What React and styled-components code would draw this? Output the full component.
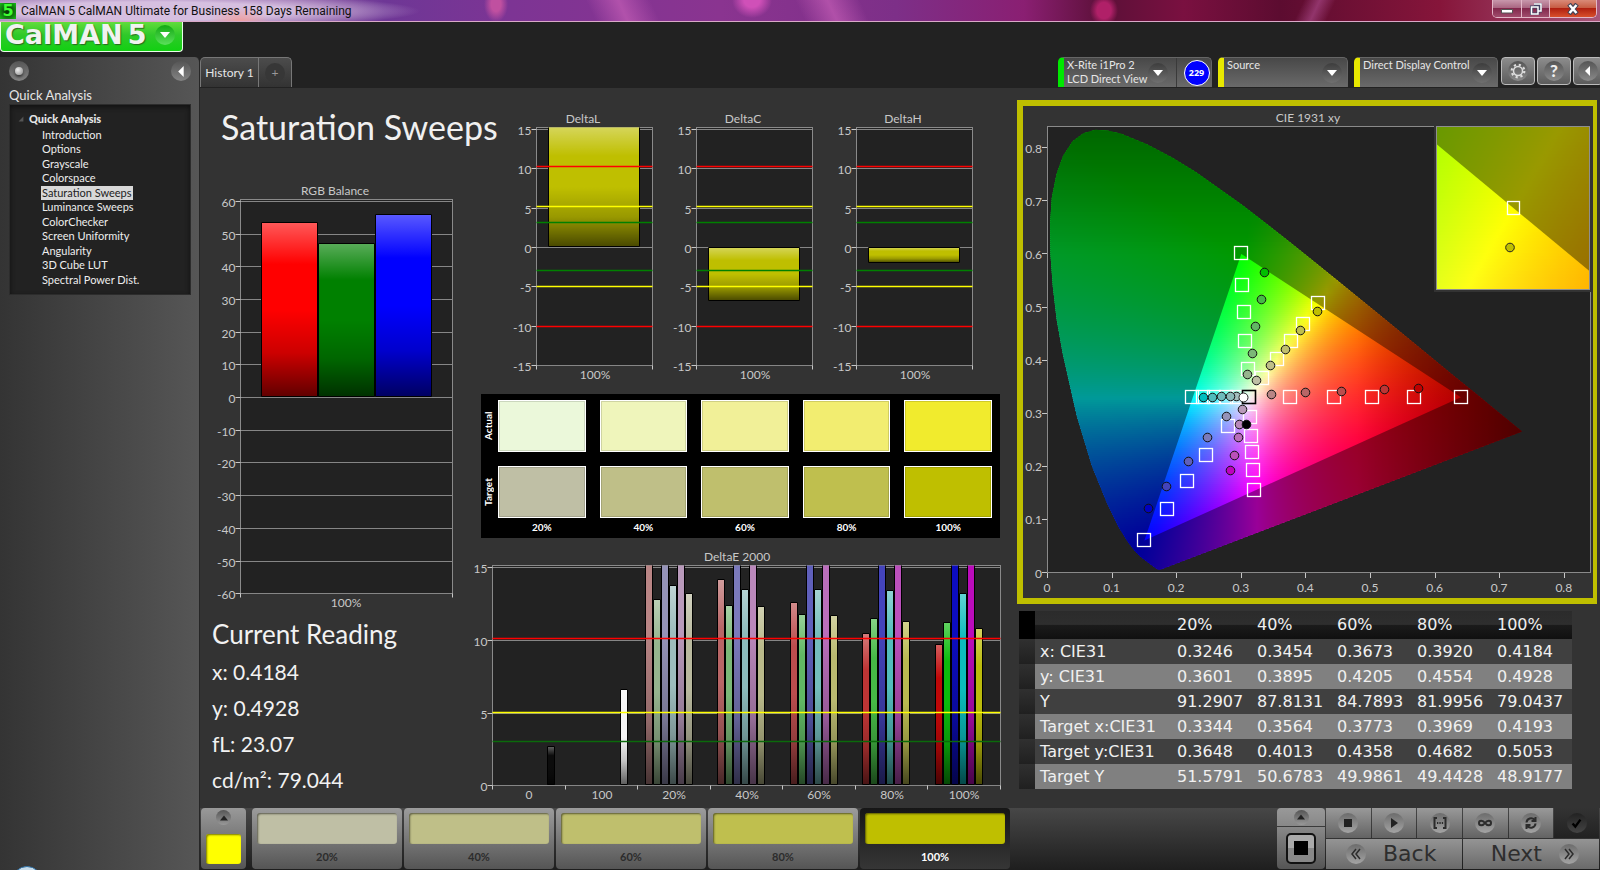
import React from "react";
import styled, { createGlobalStyle } from "styled-components";

const GlobalStyle = createGlobalStyle`
  *, *::before, *::after { box-sizing: border-box; }
  body { margin: 0; background: #222; color: #e6e6e6; font: 12px/16px Lato, "Open Sans", sans-serif; }
  button { font: inherit; color: inherit; border: 0; padding: 0; margin: 0; background: none; cursor: pointer; }
  h1, h2, p, ul { margin: 0; padding: 0; }
  ul { list-style: none; }
  svg { display: block; }
  a { color: inherit; text-decoration: none; }
`;

const Page = styled.div`
  display: flex;
  flex-direction: column;
  min-height: 100vh;
  overflow: hidden;
`;

/* ---------- window title bar ---------- */

const TitleBar = styled.header`
  display: flex;
  align-items: center;
  height: 22px;
  border-bottom: 1px solid #d9a9c8;
  background:
    radial-gradient(ellipse 12px 18px at 31% 20%, #c050a0 0 40%, #c050a000 100%),
    radial-gradient(ellipse 20px 18px at 47% 0, #d050b8 0 40%, #d050b800 100%),
    radial-gradient(ellipse 14px 16px at 69% 50%, #b02068 0 50%, #b0206800 100%),
    radial-gradient(ellipse 30px 14px at 15% 100%, #f0a0a0 0, #f0a0a000 100%),
    radial-gradient(ellipse 270px 18px at 150px 11px, #d6bfe0 0 50%, #d6bfe000 100%),
    linear-gradient(115deg, #ffffff00 81%, #a84888aa 82%, #ffffff00 83%),
    linear-gradient(65deg, #ffffff00 37%, #c860b8aa 39%, #ffffff00 41%, #ffffff00 50%, #c860b8aa 52%, #ffffff00 54%),
    linear-gradient(90deg, #8d6aa8 0, #8f62a8 18%, #6e3796 24%, #7d3494 32%, #8a3490 45%, #7d2f88 56%, #8a1f72 64%, #5c1038 69%, #7a1040 74%, #5c0c30 80%, #86153a 90%, #a7567a 100%);
`;

const AppBadge = styled.span`
  width: 16px;
  height: 16px;
  margin: 0 5px 0 0;
  background: radial-gradient(circle, #0a3a08 20%, #18c018 100%);
  color: #3dff30;
  font: bold 16px/16px "DejaVu Sans", sans-serif;
  text-align: center;
`;

const WindowTitle = styled.span`
  flex: 1;
  color: #111;
  font: 12px/16px Roboto, sans-serif;
`;

const WindowButtons = styled.div`
  display: flex;
  align-self: flex-start;
  height: 18px;
  margin-right: 3px;
  border: 1px solid #e3b7c8;
  border-top: 0;
  border-radius: 0 0 5px 5px;
  overflow: hidden;
`;

const WindowButton = styled.button`
  display: grid;
  place-items: center;
  width: ${(p) => (p.$close ? 47 : 28)}px;
  border-left: ${(p) => (p.$first ? 0 : 1)}px solid #e3b7c8;
  background: ${(p) =>
    p.$close
      ? "linear-gradient(#d98a78 0, #c65a40 48%, #b02010 50%, #d8502c 100%)"
      : "linear-gradient(#c898ac 0, #a86480 48%, #82284c 50%, #a04c6c 100%)"};
`;

/* ---------- logo strip ---------- */

const LogoStrip = styled.div`
  height: 35px;
`;

const LogoButton = styled.button`
  display: flex;
  align-items: center;
  gap: 9px;
  height: 30px;
  width: 183px;
  padding: 0 0 4px 4px;
  border: 1px solid #e8ffe8;
  border-top: 0;
  border-radius: 0 0 4px 4px;
  background: linear-gradient(#62dc3c 0, #2fc92a 45%, #12d012 100%);
`;

const LogoText = styled.span`
  display: flex;
  gap: 5px;
  color: #f0f3f0;
  font: bold 27px/26px "DejaVu Sans", sans-serif;
  text-shadow: 1px 1px 1px #2c6a20;
`;

const LogoArrow = styled.span`
  display: grid;
  place-items: center;
  width: 20px;
  height: 20px;
  border-radius: 50%;
  background: linear-gradient(#12a812, #5be05b);
`;

/* ---------- sidebar ---------- */

const Body = styled.div`
  display: flex;
  flex: 1;
`;

const Sidebar = styled.aside`
  position: relative;
  flex: 0 0 200px;
  padding: 4px 8px 0 9px;
  border-right: 1px solid #262626;
  border-radius: 0 5px 0 0;
  background: linear-gradient(90deg, #343434, #565656);
  overflow: hidden;
`;

const SidebarTools = styled.div`
  display: flex;
  justify-content: space-between;
  height: 26px;
`;

const RoundButton = styled.button`
  display: grid;
  place-items: center;
  width: 20px;
  height: 20px;
  border-radius: 50%;
  background: linear-gradient(#555, #848484);
`;

const Knob = styled.span`
  width: 8px;
  height: 8px;
  border-radius: 50%;
  background: radial-gradient(circle at 35% 35%, #eee, #888);
  box-shadow: 0 2px 3px #333;
`;

const SidebarTitle = styled.h2`
  margin-bottom: 1px;
  font: 13px/16px Lato, sans-serif;
`;

const Tree = styled.nav`
  margin-top: 1px;
  padding: 7px 8px 5px 19px;
  border: 1px solid #2c2c2c;
  background: #222;
  box-shadow: inset 0 2px 5px #111;
  font-size: 11px;
  min-height: 191px;
`;

const TreeHead = styled.div`
  display: flex;
  align-items: center;
  gap: 5px;
  margin-left: -11px;
  height: 14px;
  font: 900 11px/14px Lato, sans-serif;
`;

const TreeList = styled.ul`
  display: flex;
  flex-direction: column;
  align-items: flex-start;
  padding: 2px 0 0 12px;
`;

const TreeLink = styled.a`
  display: block;
  height: 14px;
  padding: 0 1px;
  color: ${(p) => (p.$active ? "#222" : "#eee")};
  background: ${(p) => (p.$active ? "#d8d8d8" : "none")};
  font: 11px/14px Lato, sans-serif;
`;

const TreeItem = styled.li`
  height: 14px;
  &:nth-child(2n) { margin-bottom: 1px; }
`;

const StartOrb = styled.div`
  position: absolute;
  left: 12px;
  bottom: -26px;
  width: 30px;
  height: 30px;
  border: 1px solid #2f72a8;
  border-radius: 50%;
  background: #c8dcea;
`;

/* ---------- tabs and devices ---------- */

const Main = styled.main`
  display: flex;
  flex-direction: column;
  flex: 1;
  min-width: 0;
`;

const TopRow = styled.div`
  display: flex;
  align-items: flex-start;
  height: 31px;
  overflow: hidden;
`;

const Tabs = styled.div`
  display: flex;
  flex: 1;
`;

const Tab = styled.button`
  display: grid;
  place-items: center;
  width: ${(p) => (p.$narrow ? 33 : 59)}px;
  height: 30px;
  border: solid #777;
  border-width: 1px 1px 0 ${(p) => (p.$narrow ? 0 : 1)}px;
  border-radius: ${(p) => (p.$narrow ? "0 5px 0 0" : "5px 0 0 0")};
  background: linear-gradient(#4c4c4c, #333);
`;

const PlusMark = styled.span`
  width: 20px;
  height: 20px;
  border-radius: 50%;
  background: #373737;
  color: #999;
  font: 12px/20px Lato, sans-serif;
`;

const Devices = styled.div`
  display: flex;
  gap: 6px;
  margin-right: 3px;
`;

const Device = styled.div`
  display: flex;
  align-items: stretch;
  width: ${(p) => p.$width}px;
  height: 30px;
  border: 1px solid #666;
  border-bottom: 0;
  border-left: 6px solid ${(p) => p.$stripe};
  border-radius: 5px 5px 0 0;
  background: linear-gradient(#484848, #6a6a6a);
`;

const DeviceMenu = styled.button`
  display: flex;
  flex: 1;
  align-items: center;
  justify-content: space-between;
  padding: 0 5px 0 3px;
  text-align: left;
  font: 11px/14px Lato, sans-serif;
  white-space: nowrap;
`;

const DeviceName = styled.span`
  align-self: flex-start;
`;

const MenuArrow = styled.span`
  display: grid;
  place-items: center;
  flex: none;
  width: 20px;
  height: 20px;
  border-radius: 50%;
  background: linear-gradient(#3d3d3d, #707070);
`;

const CountCell = styled.div`
  display: grid;
  place-items: center;
  width: 35px;
  margin-left: 3px;
  padding-left: 5px;
  border-left: 1px solid #3a3a3a;
`;

const Count = styled.span`
  width: 26px;
  height: 26px;
  border: 1px solid #fff;
  border-radius: 50%;
  background: #00f;
  color: #fff;
  font: bold 9px/24px "Open Sans", sans-serif;
  text-align: center;
`;

const Tools = styled.div`
  display: flex;
  gap: 2px;
  width: 99px;
`;

const ToolButton = styled.button`
  display: grid;
  place-items: center;
  flex: none;
  width: ${(p) => (p.$edge ? 30 : 34)}px;
  height: 28px;
  border: 1px solid #bbb;
  border-radius: 4px;
  background: linear-gradient(#8c8c8c, #5c5c5c);
`;

const ToolFace = styled.span`
  display: grid;
  place-items: center;
  width: 20px;
  height: 20px;
  border-radius: 50%;
  background: linear-gradient(#555, #8a8a8a);
  color: #eee;
  font: 900 17px/20px Lato, sans-serif;
`;

/* ---------- dashboard ---------- */

const Dashboard = styled.div`
  display: grid;
  grid-template-columns: 275fr 535fr 590fr;
  flex: 1;
  align-items: start;
  background: #333;
`;

const LeftColumn = styled.section`
  min-width: 0;
  padding-top: 19px;
`;

const MiddleColumn = styled.section`
  min-width: 0;
  padding-top: 22px;
`;

const RightColumn = styled.section`
  min-width: 0;
  padding: 12px 3px 0 7px;
`;

const PageTitle = styled.h1`
  margin: 0 0 33px 21px;
  color: #f0f0f0;
  font: 34px/40px Lato, sans-serif;
  white-space: nowrap;
`;

const ChartSvg = styled.svg`
  width: 100%;
  height: auto;
  overflow: visible;
  font: 12px Lato, sans-serif;
  fill: #c8c8c8;
`;

const Reading = styled.div`
  padding: 4px 0 0 12px;
  color: #f2f2f2;
`;

const ReadingTitle = styled.h2`
  margin-bottom: 2px;
  font: 26px/36px Lato, sans-serif;
`;

const ReadingLine = styled.p`
  font: 21px/36px Lato, sans-serif;
`;

const DeltaRow = styled.div`
  display: grid;
  grid-template-columns: repeat(3, 1fr);
  padding: 0 30px 0 25px;
`;

const SwatchPanel = styled.div`
  display: flex;
  flex-direction: column;
  gap: 14px;
  height: 144px;
  margin: 10px 10px 7px 6px;
  padding: 6px 8px 0 0;
  background: #000;
  color: #fff;
`;

const SwatchRow = styled.div`
  display: grid;
  grid-template-columns: 17px 1fr;
`;

const SwatchCells = styled.div`
  display: grid;
  grid-template-columns: repeat(5, 1fr);
  grid-column: 2;
  gap: 14px;
`;

const RowName = styled.div`
  writing-mode: vertical-rl;
  transform: rotate(180deg);
  padding-left: 3px;
  text-align: center;
  font: bold 10px/14px Lato, sans-serif;
`;

const Swatch = styled.div`
  height: 52px;
  border: 1px solid #fff;
  background: ${(p) => p.$color};
  box-shadow: inset 0 0 0 1px #0002;
`;

const SwatchLabel = styled.div`
  margin-top: -12px;
  text-align: center;
  font: bold 10px/14px Lato, sans-serif;
`;

const CiePanel = styled.div`
  border: 6px solid #bfbf00;
  border-right-width: 4px;
  background: #333;
`;

const DataTable = styled.table`
  width: calc(100% - 27px);
  margin: 7px 0 0 2px;
  border-collapse: collapse;
  table-layout: fixed;
  color: #f0f0f0;
  font: 16px/24px "DejaVu Sans", sans-serif;
  text-align: left;
`;

const HeadRow = styled.tr`
  height: 28px;
  background: linear-gradient(#2b2b2b 0, #2e2e2e 48%, #1b1b1b 50%, #101010 100%);
`;

const DataRow = styled.tr`
  height: 25px;
  background: ${(p) => (p.$light ? "#808080" : "#404040")};
`;

const HeadCell = styled.th`
  padding: 0 0 0 5px;
  font-weight: normal;
`;

const DataCell = styled.td`
  padding: 0 0 0 5px;
  white-space: nowrap;
`;

const Marker = styled.td`
  padding: 0;
  background: ${(p) => (p.$head ? "#000" : "linear-gradient(#303030, #202020)")};
`;

/* ---------- bottom bar ---------- */

const BottomBar = styled.footer`
  display: flex;
  height: 62px;
  padding: 0 1px 1px;
  background: linear-gradient(#474747, #1e1e1e);
`;

const CurrentColor = styled.button`
  display: flex;
  flex-direction: column;
  align-items: center;
  gap: 9px;
  width: 45px;
  margin-right: 6px;
  padding: 2px 5px 5px;
  border-radius: 4px;
  background: linear-gradient(#999, #555);
`;

const CurrentSwatch = styled.span`
  width: 35px;
  flex: 1;
  border-radius: 3px;
  background: #ff0;
  box-shadow: inset 1px 1px 2px #770;
`;

const SmallDisc = styled.span`
  display: grid;
  place-items: center;
  flex: none;
  width: 15px;
  height: 15px;
  border-radius: 50%;
  background: linear-gradient(#555, #999);
`;

const Levels = styled.div`
  display: flex;
  gap: 2px;
  flex: 0 1 758px;
  margin-right: auto;
`;

const LevelButton = styled.button`
  display: flex;
  flex: 1;
  flex-direction: column;
  padding: 5px;
  border-radius: 4px;
  background: ${(p) => (p.$active ? "linear-gradient(#161616, #363636)" : "linear-gradient(#9c9c9c, #555)")};
  color: ${(p) => (p.$active ? "#fff" : "#2c2c2c")};
  font: bold 11px/14px Lato, sans-serif;
  text-align: center;
`;

const LevelSwatch = styled.span`
  height: 36px;
  margin-bottom: 6px;
  border-radius: 3px;
  background: ${(p) => p.$color};
  box-shadow: inset 1px 1px 2px #0008;
`;

const PatternColumn = styled.div`
  display: flex;
  flex-direction: column;
  gap: 1px;
  width: 48px;
  margin-right: 1px;
`;

const PatternTab = styled.button`
  display: grid;
  place-items: center;
  height: 18px;
  border-radius: 4px 4px 0 0;
  background: linear-gradient(#999, #888);
`;

const PatternButton = styled.button`
  display: grid;
  place-items: center;
  flex: 1;
  border-radius: 0 0 4px 4px;
  background: linear-gradient(#888, #555);
`;

const PatternFace = styled.span`
  display: grid;
  place-items: center;
  width: 30px;
  height: 31px;
  border: 2px solid #111;
  border-radius: 5px;
  background: linear-gradient(#aaa 50%, #888 50%);
`;

const BlackPatch = styled.span`
  width: 14px;
  height: 14px;
  background: #000;
`;

const Transport = styled.div`
  display: grid;
  grid-template-columns: repeat(6, 1fr);
  grid-template-rows: 30px 30px;
  gap: 1px;
  width: 273px;
`;

const TransportButton = styled.button`
  display: grid;
  place-items: center;
  background: ${(p) => (p.$dark ? "linear-gradient(#333, #222)" : "linear-gradient(#999, #636363)")};
`;

const Disc = styled.span`
  display: grid;
  place-items: center;
  width: 20px;
  height: 20px;
  border-radius: 50%;
  background: ${(p) => (p.$dark ? "linear-gradient(#222, #444)" : "linear-gradient(#6c6c6c, #a4a4a4)")};
`;

const NavButton = styled.button`
  display: flex;
  grid-column: span 3;
  align-items: center;
  justify-content: ${(p) => (p.$end ? "flex-end" : "flex-start")};
  gap: 17px;
  padding: 0 20px;
  background: linear-gradient(#949494, #6a6a6a);
  color: #2e2e2e;
  font: 22px/28px "DejaVu Sans", sans-serif;
`;

/* ---------- data ---------- */

const steps = ["Introduction", "Options", "Grayscale", "Colorspace", "Saturation Sweeps", "Luminance Sweeps",
  "ColorChecker", "Screen Uniformity", "Angularity", "3D Cube LUT", "Spectral Power Dist."];

const levels = ["20%", "40%", "60%", "80%", "100%"];
const actual = ["#ebf8da", "#eff5bb", "#f1f098", "#f2ed70", "#f1eb2d"];
const target = ["#bfbfa5", "#bfbf88", "#bfbf6d", "#bfbf4e", "#bfbf00"];

const readings = [
  ["x: CIE31", "0.3246", "0.3454", "0.3673", "0.3920", "0.4184"],
  ["y: CIE31", "0.3601", "0.3895", "0.4205", "0.4554", "0.4928"],
  ["Y", "91.2907", "87.8131", "84.7893", "81.9956", "79.0437"],
  ["Target x:CIE31", "0.3344", "0.3564", "0.3773", "0.3969", "0.4193"],
  ["Target y:CIE31", "0.3648", "0.4013", "0.4358", "0.4682", "0.5053"],
  ["Target Y", "51.5791", "50.6783", "49.9861", "49.4428", "48.9177"],
];

const hues = [
  ["#b98585", "#b86666", "#bb4d4d", "#bd3535", "#bf0808"],
  ["#96b48e", "#7bb877", "#61b863", "#46b946", "#0cbb0c"],
  ["#9593b8", "#7b7abb", "#6060bb", "#4444bb", "#0c0cbf"],
  ["#9dbdbd", "#8cbbbb", "#74bcbc", "#53bcbc", "#0cbcbc"],
  ["#b99abb", "#ba88bb", "#ba6ebb", "#bb50bb", "#bb0cbb"],
  ["#b9b99e", "#b9b98a", "#b9b970", "#b9b950", "#bbbb0c"],
];
const errors = [
  [16, 14.2, 12.6, 10.5, 9.7],
  [12.8, 12.4, 11.8, 11.5, 11.2],
  [16, 16, 16, 16, 16],
  [13.8, 13.5, 13.5, 13.4, 13.2],
  [16, 16, 16, 16, 16],
  [13.2, 12.3, 11.7, 11.3, 10.8],
];

/* ---------- bar charts ---------- */

function BarChart({ id, size, frame, title, titleX, ticks, zero, scale, limits = [], limitZero, limitScale, bars, labels, labelY, marks }) {
  const [l, t, r, b] = frame;
  const y = (v) => Math.floor(zero - scale * v) + 0.5;
  return (
    <ChartSvg viewBox={`0 0 ${size[0]} ${size[1]}`} role="img" aria-label={title}>
      <defs>
        <linearGradient id={`${id}-shine`} x1="0" y1="0" x2="0" y2="1">
          <stop offset="0" stopColor="#fff" stopOpacity="0.35" />
          <stop offset="0.24" stopColor="#fff" stopOpacity="0" />
          <stop offset="0.5" stopColor="#000" stopOpacity="0" />
          <stop offset="0.75" stopColor="#000" stopOpacity="0.2" />
          <stop offset="1" stopColor="#000" stopOpacity="0.62" />
        </linearGradient>
        <linearGradient id={`${id}-shade`} x1="0" y1="0" x2="0" y2="1">
          <stop offset="0.3" stopColor="#000" stopOpacity="0" />
          <stop offset="0.7" stopColor="#000" stopOpacity="0.2" />
          <stop offset="1" stopColor="#000" stopOpacity="0.62" />
        </linearGradient>
      </defs>
      <text x={titleX} y={labelY[0]} textAnchor="middle">{title}</text>
      <rect x={l} y={t} width={r - l} height={b - t} fill="#222" stroke="#8a8a8a" />
      {ticks.map((v) => (
        <g key={v}>
          <path d={`M${l} ${y(v)}H${r}`} stroke="#868686" />
          <path d={`M${l - 5} ${y(v)}H${l}`} stroke="#c8c8c8" />
          <text x={l - 5} y={y(v) + 5} textAnchor="end">{v}</text>
        </g>
      ))}
      {bars.map(([x, w, v, color], i) => {
        const top = Math.max(t, Math.min(y(v), y(0)));
        const h = (v < 0 ? y(v) : y(0)) - top - 1;
        const clipped = top === t;
        return (
          <g key={i}>
            <rect x={x} y={top} width={w} height={h} fill={color} />
            <rect x={x} y={top} width={w} height={h} fill={`url(#${id}-${clipped && w < 10 ? "shade" : "shine"})`} />
            <path d={`M${x} ${top}V${top + h}H${x + w}V${top}${clipped ? "" : "Z"}`} fill="none" stroke="#000" />
          </g>
        );
      })}
      {limits.map(([v, color]) => (
        <path key={v} d={`M${l} ${Math.floor(limitZero - limitScale * v) + 0.5}H${r}`} stroke={color} strokeWidth="1.3" />
      ))}
      {marks.map((x) => <path key={x} d={`M${x} ${b}v4`} stroke="#c8c8c8" />)}
      {labels.map(([x, s]) => <text key={s} x={x} y={labelY[1]} textAnchor="middle">{s}</text>)}
    </ChartSvg>
  );
}

const deltaLimits = [[10, "#f00"], [5, "#ff0"], [3, "#008000"], [-3, "#008000"], [-5, "#ff0"], [-10, "#f00"]];

function DeltaChart({ name, value }) {
  return (
    <BarChart id={name} size={[160, 274]} frame={[36.5, 17.5, 152.5, 255.5]} title={name} titleX={83}
      ticks={[15, 10, 5, 0, -5, -10, -15]} zero={137.5} scale={7.87} limits={deltaLimits} limitZero={136.5} limitScale={8}
      bars={[[48.5, 91, value, "#bfbf00"]]} labels={[[95, "100%"]]} labelY={[13, 269]} marks={[36.5, 152.5]} />
  );
}

const errorBars = [[72.5, 7, 2.7, "#0c0c0c"], [145.5, 7, 6.6, "#f4f4f4"]];
levels.forEach((_, k) =>
  hues.forEach((shades, h) => errorBars.push([Math.round(169.5 + 72.6 * k + 8 * h) + 0.5, 7, errors[h][k], shades[k]]))
);

/* ---------- chromaticity diagram ---------- */

const locus = [[.1741, .005], [.1714, .0051], [.1689, .0069], [.1644, .0109], [.1566, .0177], [.144, .0297],
  [.1355, .0399], [.1241, .0578], [.1096, .0868], [.0913, .1327], [.0687, .2007], [.0454, .295], [.0235, .4127],
  [.0143, .476], [.0082, .5384], [.0047, .598], [.0039, .6548], [.0066, .706], [.0139, .7502], [.0242, .785], [.0389, .812],
  [.0555, .8273], [.0743, .8338], [.0943, .832], [.1142, .8262], [.1547, .8059], [.1929, .7816], [.2296, .7543],
  [.3016, .6923], [.3731, .6245], [.4441, .5547], [.5125, .4866], [.5752, .4242], [.627, .3725], [.6658, .334],
  [.6915, .3083], [.719, .2809], [.7347, .2653]];
const gamut = [[.64, .33], [.3, .6], [.15, .06]];

const px = (x) => 1047.5 + 646 * x;
const py = (y) => 572.5 - 531 * y;
const outline = (pts) => pts.map(([x, y], i) => `${i ? "L" : "M"}${px(x).toFixed(1)} ${py(y).toFixed(1)}`).join("") + "Z";

function chroma(x, y) {
  const yy = Math.max(y, 0.002);
  const X = x / yy;
  const Z = (1 - x - yy) / yy;
  const lin = [
    3.2406 * X - 1.5372 - 0.4986 * Z,
    -0.9689 * X + 1.8758 + 0.0415 * Z,
    0.0557 * X - 0.204 + 1.057 * Z,
  ].map((c) => Math.max(c, 0));
  const peak = Math.max(...lin);
  const fade = Math.min(1, 1 - (x - 0.48) * 1.9, 1 - (y - 0.6) * 1.4);
  return `rgb(${lin.map((c) => Math.round(255 * fade * (c / peak))).join(" ")})`;
}

function ColorField({ id, left, right, top, bottom, toX, toY, step }) {
  const rows = [];
  for (let y = top; y < bottom; y += step) rows.push(y);
  const stops = Array.from({ length: 49 }, (_, i) => i / 48);
  return rows.map((y) => (
    <g key={y}>
      <linearGradient id={`${id}${y}`}>
        {stops.map((s) => (
          <stop key={s} offset={s} stopColor={chroma(toX(left + s * (right - left)), toY(y + step / 2))} />
        ))}
      </linearGradient>
      <rect x={left} y={y} width={right - left} height={Math.min(step + 1, bottom - y)} fill={`url(#${id}${y})`} />
    </g>
  ));
}

const boxes = [[1241, 253], [1242, 285], [1244, 312], [1245, 341], [1248, 369], [1318, 303], [1303, 324], [1291, 341],
  [1277, 359], [1262, 378], [1290, 397], [1334, 397], [1372, 397], [1414, 397], [1461, 397], [1192, 397], [1203, 397],
  [1214, 397], [1226, 397], [1237, 397], [1144, 540], [1167, 509], [1187, 481], [1206, 455], [1228, 426], [1254, 490],
  [1253, 470], [1252, 452], [1251, 436], [1250, 417]];
const dots = [
  [1247, 374, "#96b48e"], [1252, 353, "#7bb877"], [1255, 326, "#61b863"], [1261, 299, "#46b946"], [1264, 272, "#00bf00"],
  [1256, 380, "#bfbfa5"], [1270, 365, "#bfbf88"], [1285, 349, "#bfbf6d"], [1300, 330, "#bfbf4e"], [1317, 311, "#bfbf00"],
  [1271, 394, "#b98585"], [1305, 392, "#b86666"], [1341, 391, "#bb4d4d"], [1384, 389, "#bd3535"], [1418, 388, "#bf0000"],
  [1236, 396, "#a5bfbf"], [1230, 396, "#8cbbbb"], [1221, 396, "#6ebcbc"], [1212, 397, "#4ebcbc"], [1203, 397, "#00bfbf"],
  [1226, 416, "#9593b8"], [1207, 437, "#7b7abb"], [1188, 461, "#6060bb"], [1166, 486, "#4444bb"], [1148, 508, "#0000bf"],
  [1242, 409, "#b99abb"], [1239, 424, "#ba88bb"], [1238, 437, "#ba6ebb"], [1234, 455, "#bb50bb"], [1230, 470, "#bf00bf"],
  [1246, 424, "#000"],
];

function CieChart() {
  const tenths = [0, 1, 2, 3, 4, 5, 6, 7, 8];
  const name = (n) => (n ? `0.${n}` : "0");
  return (
    <ChartSvg viewBox="1023 106 570 492" role="img" aria-label="CIE 1931 xy">
      <defs>
        <clipPath id="locus"><path d={outline(locus)} /></clipPath>
      </defs>
      <text x="1308" y="122" textAnchor="middle">CIE 1931 xy</text>
      <rect x="1047.5" y="126.5" width="543" height="446" fill="#222" stroke="#8a8a8a" />
      <g clipPath="url(#locus)">
        <ColorField id="cie" left={1047} right={1527} top={128} bottom={573} step={2}
          toX={(p) => (p - 1047.5) / 646} toY={(p) => (572.5 - p) / 531} />
      </g>
      <path d={outline(locus) + outline(gamut)} fill="#000" fillOpacity="0.4" fillRule="evenodd" />
      {tenths.map((n) => (
        <g key={n}>
          <path d={`M${Math.round(px(n / 10) - 0.5) + 0.5} 573v5M1042 ${Math.round(py(n / 10) - 0.5) + 0.5}h5`} stroke="#c8c8c8" />
          <text x={px(n / 10) - 0.5} y="592" textAnchor="middle">{name(n)}</text>
          <text x="1042" y={py(n / 10) + 5} textAnchor="end">{name(n)}</text>
        </g>
      ))}
      {boxes.map(([x, y]) => (
        <rect key={`${x}-${y}`} x={x - 6.5} y={y - 6.5} width="13" height="13" fill="none" stroke="#fff" strokeWidth="1.3" />
      ))}
      <rect x="1242.5" y="390.5" width="13" height="13" fill="none" stroke="#000" strokeWidth="1.6" />
      <g transform="translate(0.5 0.5)">
        {dots.map(([x, y, c]) => <circle key={`${x}-${y}`} cx={x} cy={y} r="4.3" fill={c} stroke="#111" />)}
      </g>
      <circle cx="1243.5" cy="397.5" r="4.5" fill="#fff" stroke="#222" />
      <rect x="1434" y="125" width="158" height="167" fill="#333" />
      <ColorField id="inset" left={1437} right={1590} top={127} bottom={289} step={3}
        toX={(p) => 0.4193 + (p - 1513.5) / 3010} toY={(p) => 0.5053 - (p - 208) / 3144} />
      <path d="M1437 144.5V127H1590V271.5Z" fill="#000" fillOpacity="0.4" />
      <rect x="1436.5" y="126.5" width="153" height="163" fill="none" stroke="#8f8f8f" />
      <rect x="1507.5" y="201.5" width="12" height="13" fill="none" stroke="#fff" strokeWidth="1.3" />
      <circle cx="1510" cy="247.5" r="4.3" fill="#bfbf00" stroke="#222" />
    </ChartSvg>
  );
}

/* ---------- small glyphs ---------- */

const Triangle = ({ dir, size = 10, color = "#fff" }) => {
  const shapes = { down: "M0 2h10L5 8z", up: "M0 8h10L5 2z", left: "M7 0v10L2 5z", right: "M2 0v10l7-5z", corner: "M9 1v8H1z" };
  return <svg width={size} height={size} viewBox="0 0 10 10" fill={color}><path d={shapes[dir]} /></svg>;
};

const Stroke = ({ d, size = 14, width = 2, color = "#2c2c2c" }) => (
  <svg width={size} height={size} viewBox="0 0 14 14" fill="none" stroke={color} strokeWidth={width}><path d={d} /></svg>
);

const transport = [
  ["Stop", <svg width="8" height="8" viewBox="0 0 8 8"><path d="M0 0h8v8H0z" fill="#222" /></svg>],
  ["Play", <Triangle dir="right" color="#222" />],
  ["Read series", <Stroke d="M4 2H1.5v10H4M10 2h2.5v10H10M4 7h1.3M6.4 7h1.3M8.800 7h1.3" width={2} />],
  ["Read continuously", <Stroke d="M7 7C5 4 1 4 1 7s4 3 6 0 6-3 6 0-4 3-6 0z" width={2} />],
  ["Refresh", <Stroke d="M2.5 6.5A4.5 4.5 0 0 1 10.5 4M11.5 7.5A4.5 4.5 0 0 1 3.5 10M11.5 1v4h-4M2.5 13V9h4" width={2} />],
];

export default function App() {
  return (
    <Page>
      <GlobalStyle />
      <TitleBar>
        <AppBadge>5</AppBadge>
        <WindowTitle>CalMAN 5 CalMAN Ultimate for Business 158 Days Remaining</WindowTitle>
        <WindowButtons>
          <WindowButton $first aria-label="Minimize">
            <svg width="12" height="10" viewBox="0 0 12 10"><path d="M.5 5.5h11v3.5H.5z" fill="#fff" stroke="#555" /></svg>
          </WindowButton>
          <WindowButton aria-label="Restore">
            <svg width="12" height="12" viewBox="0 0 12 12" fill="none"><path d="M4 1h7v7H8.5M1.5 4h6.5v7H1.5z" stroke="#446" strokeWidth="3" /><path d="M4 1h7v7H8.5M1.5 4h6.5v7H1.5z" stroke="#fff" strokeWidth="1.5" /></svg>
          </WindowButton>
          <WindowButton $close aria-label="Close">
            <svg width="12" height="12" viewBox="0 0 12 12" fill="none"><path d="M2 1l8 10M10 1l-8 10" stroke="#445" strokeWidth="4.5" /><path d="M2.5 2l7 8M9.5 2l-7 8" stroke="#fff" strokeWidth="2.5" /></svg>
          </WindowButton>
        </WindowButtons>
      </TitleBar>
      <LogoStrip>
        <LogoButton>
          <LogoText><span>CalMAN</span><span>5</span></LogoText>
          <LogoArrow><Triangle dir="down" /></LogoArrow>
        </LogoButton>
      </LogoStrip>
      <Body>
        <Sidebar>
          <SidebarTools>
            <RoundButton aria-label="Record"><Knob /></RoundButton>
            <RoundButton aria-label="Collapse"><Triangle dir="left" size={11} /></RoundButton>
          </SidebarTools>
          <SidebarTitle>Quick Analysis</SidebarTitle>
          <Tree>
            <TreeHead><Triangle dir="corner" size={6} color="#555" />Quick Analysis</TreeHead>
            <TreeList>
              {steps.map((s) => (
                <TreeItem key={s}><TreeLink href="#" $active={s === "Saturation Sweeps"}>{s}</TreeLink></TreeItem>
              ))}
            </TreeList>
          </Tree>
          <StartOrb />
        </Sidebar>
        <Main>
          <TopRow>
            <Tabs>
              <Tab>History 1</Tab>
              <Tab $narrow aria-label="Add history"><PlusMark>+</PlusMark></Tab>
            </Tabs>
            <Devices>
              <Device $width={154} $stripe="#00e800">
                <DeviceMenu>
                  <DeviceName>X-Rite i1Pro 2<br />LCD Direct View</DeviceName>
                  <MenuArrow><Triangle dir="down" /></MenuArrow>
                </DeviceMenu>
                <CountCell><Count>229</Count></CountCell>
              </Device>
              <Device $width={130} $stripe="#e8e800">
                <DeviceMenu><DeviceName>Source</DeviceName><MenuArrow><Triangle dir="down" /></MenuArrow></DeviceMenu>
              </Device>
              <Device $width={144} $stripe="#e8e800">
                <DeviceMenu><DeviceName>Direct Display Control</DeviceName><MenuArrow><Triangle dir="down" /></MenuArrow></DeviceMenu>
              </Device>
            </Devices>
            <Tools>
              <ToolButton aria-label="Settings">
                <ToolFace>
                  <svg width="16" height="16" viewBox="0 0 16 16" fill="none" stroke="#ddd">
                    <circle cx="8" cy="8" r="4.5" strokeWidth="1.5" />
                    <circle cx="8" cy="8" r="6.3" strokeWidth="2.2" strokeDasharray="2.2 2.748" />
                  </svg>
                </ToolFace>
              </ToolButton>
              <ToolButton aria-label="Help"><ToolFace>?</ToolFace></ToolButton>
              <ToolButton $edge aria-label="Collapse panel"><ToolFace><Triangle dir="left" /></ToolFace></ToolButton>
            </Tools>
          </TopRow>
          <Dashboard>
            <LeftColumn>
              <PageTitle>Saturation Sweeps</PageTitle>
              <BarChart id="rgb" size={[275, 432]} frame={[40.5, 19.5, 252.5, 413.5]} title="RGB Balance" titleX={135}
                ticks={[60, 50, 40, 30, 20, 10, 0, -10, -20, -30, -40, -50, -60]} zero={217.5} scale={3.27}
                bars={[[61.5, 56, 53.4, "#f00"], [118.5, 56, 47, "#008000"], [175.5, 56, 56, "#00f"]]}
                labels={[[146, "100%"]]} labelY={[15, 427]} marks={[40.5, 252.5]} />
              <Reading>
                <ReadingTitle>Current Reading</ReadingTitle>
                <ReadingLine>x: 0.4184</ReadingLine>
                <ReadingLine>y: 0.4928</ReadingLine>
                <ReadingLine>fL: 23.07</ReadingLine>
                <ReadingLine>cd/m²: 79.044</ReadingLine>
              </Reading>
            </LeftColumn>
            <MiddleColumn>
              <DeltaRow>
                <DeltaChart name="DeltaL" value={16} />
                <DeltaChart name="DeltaC" value={-6.8} />
                <DeltaChart name="DeltaH" value={-2} />
              </DeltaRow>
              <SwatchPanel>
                <SwatchRow>
                  <RowName>Actual</RowName>
                  <SwatchCells>{actual.map((c) => <Swatch key={c} $color={c} />)}</SwatchCells>
                </SwatchRow>
                <SwatchRow>
                  <RowName>Target</RowName>
                  <SwatchCells>{target.map((c) => <Swatch key={c} $color={c} />)}</SwatchCells>
                </SwatchRow>
                <SwatchRow>
                  <SwatchCells>{levels.map((l) => <SwatchLabel key={l}>{l}</SwatchLabel>)}</SwatchCells>
                </SwatchRow>
              </SwatchPanel>
              <BarChart id="de" size={[535, 258]} frame={[17.5, 20.5, 525.5, 240.5]} title="DeltaE 2000" titleX={262}
                ticks={[15, 10, 5, 0]} zero={240.9} scale={14.55}
                limits={[[10, "#f00"], [5, "#ff0"], [3, "#0b6a0b"]]} limitZero={240.5} limitScale={14.7}
                bars={errorBars} labelY={[16, 254]}
                labels={["0", "100", ...levels].map((s, i) => [54 + Math.round(72.5 * i), s])}
                marks={[17.5, 90.5, 162.5, 235.5, 307.5, 380.5, 452.5, 525.5]} />
            </MiddleColumn>
            <RightColumn>
              <CiePanel><CieChart /></CiePanel>
              <DataTable>
                <colgroup>
                  <col width="16" /><col width="137" /><col /><col /><col /><col /><col />
                </colgroup>
                <thead>
                  <HeadRow>
                    <Marker $head />
                    <HeadCell />
                    {levels.map((l) => <HeadCell key={l} scope="col">{l}</HeadCell>)}
                  </HeadRow>
                </thead>
                <tbody>
                  {readings.map(([name, ...values], i) => (
                    <DataRow key={name} $light={i % 2 === 1}>
                      <Marker />
                      <HeadCell scope="row">{name}</HeadCell>
                      {values.map((v) => <DataCell key={v}>{v}</DataCell>)}
                    </DataRow>
                  ))}
                </tbody>
              </DataTable>
            </RightColumn>
          </Dashboard>
          <BottomBar>
            <CurrentColor aria-label="Current color">
              <SmallDisc><Triangle dir="up" size={8} color="#222" /></SmallDisc>
              <CurrentSwatch />
            </CurrentColor>
            <Levels>
              {levels.map((l, i) => (
                <LevelButton key={l} $active={i === 4}><LevelSwatch $color={target[i]} />{l}</LevelButton>
              ))}
            </Levels>
            <PatternColumn>
              <PatternTab aria-label="Open patterns"><SmallDisc><Triangle dir="up" size={8} color="#222" /></SmallDisc></PatternTab>
              <PatternButton aria-label="Pattern"><PatternFace><BlackPatch /></PatternFace></PatternButton>
            </PatternColumn>
            <Transport>
              {transport.map(([label, icon]) => (
                <TransportButton key={label} aria-label={label}><Disc>{icon}</Disc></TransportButton>
              ))}
              <TransportButton $dark aria-label="Accept"><Disc $dark><Stroke d="M2 7l3.5 4L12 2" color="#000" width={3} size={11} /></Disc></TransportButton>
              <NavButton><Disc><Stroke d="M7 2L3 7l4 5M11 2L7 7l4 5" width={1.5} /></Disc>Back</NavButton>
              <NavButton $end>Next<Disc><Stroke d="M3 2l4 5-4 5M7 2l4 5-4 5" width={1.5} /></Disc></NavButton>
            </Transport>
          </BottomBar>
        </Main>
      </Body>
    </Page>
  );
}
